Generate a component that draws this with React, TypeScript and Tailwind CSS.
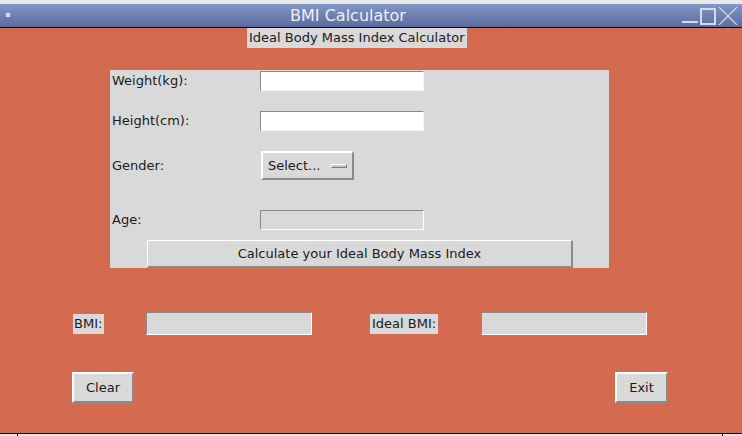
import React from 'react'

const font = { fontFamily: '"DejaVu Sans", Verdana, sans-serif' }

const sunkenWhite =
  'bg-white border border-t-[#8a8a8a] border-l-[#8a8a8a] border-b-[#f4f4f4] border-r-[#f4f4f4]'
const sunkenGray =
  'bg-[#d9d9d9] border border-t-[#8a8a8a] border-l-[#8a8a8a] border-b-white border-r-white'
const raised =
  'bg-[#d9d9d9] border-2 border-t-white border-l-white border-b-[#8a8a8a] border-r-[#8a8a8a]'

function TitleBar() {
  return (
    <div className="relative h-[24px] bg-gradient-to-b from-[#8397c7] to-[#5a6c9d] border-b border-black flex items-center justify-center shrink-0">
      <div className="absolute left-[6px] top-[9px] w-[4px] h-[4px] bg-[#d8dcea]" />
      <span className="text-[16px] text-[#eef0f7] ml-[-46px]">BMI Calculator</span>
      <div className="absolute right-[4px] top-[3px] flex items-end gap-[2px]">
        <div className="w-[16px] h-[2px] border border-[#d5dbec] mb-[2px]" />
        <div className="w-[16px] h-[17px] border-2 border-[#d5dbec]" />
        <svg width="20" height="18" viewBox="0 0 20 18">
          <path d="M1 0 L19 18 M19 0 L1 18" stroke="#d5dbec" strokeWidth="1.2" />
        </svg>
      </div>
    </div>
  )
}

function Row({ label, className, children }: { label: string; className: string; children: React.ReactNode }) {
  return (
    <div className={`flex items-center ${className}`}>
      <span className="w-[150px] pl-[2px] text-[13px] text-[#1a1a1a]">{label}</span>
      {children}
    </div>
  )
}

export default function App() {
  return (
    <div className="w-[742px] h-[436px] flex flex-col bg-[#e8e8e8] overflow-hidden" style={font}>
      <div className="h-[4px] shrink-0" />
      <TitleBar />

      {/* Main window body */}
      <div className="h-[405px] bg-[#d46a4f] flex flex-col shrink-0 text-[#1a1a1a]">
        <div className="ml-[247px] self-start h-[20px] px-[2px] bg-[#d9d9d9] flex items-center text-[13px]">
          Ideal Body Mass Index Calculator
        </div>

        <div className="ml-[110px] mt-[22px] w-[499px] h-[198px] bg-[#d9d9d9] flex flex-col">
          <Row label="Weight(kg):" className="mt-[1px] h-[20px]">
            <div className={`w-[164px] h-[20px] ${sunkenWhite}`} />
          </Row>
          <Row label="Height(cm):" className="mt-[20px] h-[20px]">
            <div className={`w-[164px] h-[20px] ${sunkenWhite}`} />
          </Row>
          <Row label="Gender:" className="mt-[20px] h-[29px]">
            <div className={`ml-[1px] w-[93px] h-[29px] ${raised} flex items-center pl-[5px] gap-[10px] text-[13px]`}>
              <span>Select...</span>
              <div className="w-[16px] h-[4px] bg-[#c8c8c8] border border-t-white border-l-white border-b-[#7a7a7a] border-r-[#7a7a7a]" />
            </div>
          </Row>
          <Row label="Age:" className="mt-[30px] h-[20px]">
            <div className={`w-[164px] h-[20px] ${sunkenGray}`} />
          </Row>
          <button
            className={`ml-[37px] mt-[10px] w-[426px] h-[28px] text-[13px] ${raised} border-t border-l flex items-center justify-center`}
          >
            Calculate your Ideal Body Mass Index
          </button>
        </div>

        <div className="mt-[44px] h-[23px] flex items-center">
          <div className="ml-[73px] w-[31px] h-[20px] bg-[#d9d9d9] flex items-center pl-[1px] text-[13px]">BMI:</div>
          <div className={`ml-[42px] w-[166px] h-[23px] ${sunkenGray}`} />
          <div className="ml-[58px] w-[68px] h-[20px] bg-[#d9d9d9] flex items-center pl-[2px] text-[13px]">Ideal BMI:</div>
          <div className={`ml-[43px] w-[166px] h-[23px] ${sunkenGray}`} />
        </div>

        <div className="mt-[37px] flex items-center">
          <button className={`ml-[72px] w-[62px] h-[31px] ${raised} text-[13px] flex items-center justify-center`}>
            Clear
          </button>
          <button className={`ml-[481px] w-[53px] h-[31px] ${raised} text-[13px] flex items-center justify-center`}>
            Exit
          </button>
        </div>
      </div>

      <div className="h-[1px] bg-black shrink-0" />
      <div className="flex-1 flex">
        <div className="ml-[17px] w-[1px] bg-black" />
        <div className="ml-[704px] w-[1px] bg-black" />
      </div>
    </div>
  )
}
